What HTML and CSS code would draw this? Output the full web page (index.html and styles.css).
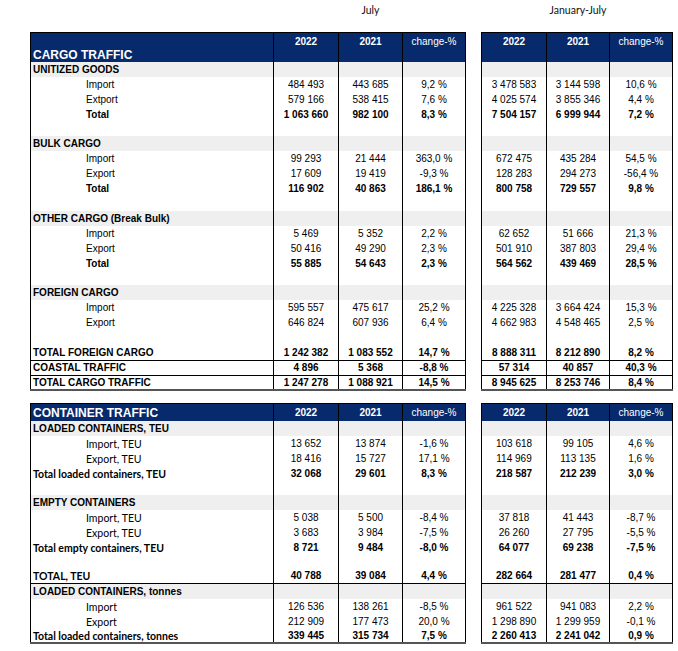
FILE: index.html
```html
<!DOCTYPE html>
<html>
<head>
<meta charset="utf-8">
<link rel="stylesheet" href="styles.css">
</head>
<body>
<div class="page">
<table class="grid">
  <colgroup>
    <col class="w-lbl"><col class="w-a"><col class="w-b"><col class="w-c"><col class="w-gap"><col class="w-a"><col class="w-d"><col class="w-c">
  </colgroup>
  <tr class="cap">
    <td></td><td></td><td class="captxt">July</td><td></td><td></td><td></td><td class="captxt">January-July</td><td></td>
  </tr>
  <tr class="hd">
    <td class="title">CARGO TRAFFIC</td><td class="yr">2022</td><td class="yr">2021</td><td class="chg">change-%</td><td class="gap"></td><td class="yr">2022</td><td class="yr">2021</td><td class="chg">change-%</td>
  </tr>
  <tr class="g"><td class="sec">UNITIZED GOODS</td><td></td><td></td><td></td><td class="gap"></td><td></td><td></td><td></td></tr>
  <tr><td class="ind">Import</td><td>484 493</td><td>443 685</td><td>9,2 %</td><td class="gap"></td><td>3 478 583</td><td>3 144 598</td><td>10,6 %</td></tr>
  <tr><td class="ind">Extport</td><td>579 166</td><td>538 415</td><td>7,6 %</td><td class="gap"></td><td>4 025 574</td><td>3 855 346</td><td>4,4 %</td></tr>
  <tr class="bold"><td class="ind">Total</td><td>1 063 660</td><td>982 100</td><td>8,3 %</td><td class="gap"></td><td>7 504 157</td><td>6 999 944</td><td>7,2 %</td></tr>
  <tr class="blank14"><td></td><td></td><td></td><td></td><td class="gap"></td><td></td><td></td><td></td></tr>
  <tr class="g"><td class="sec">BULK CARGO</td><td></td><td></td><td></td><td class="gap"></td><td></td><td></td><td></td></tr>
  <tr><td class="ind">Import</td><td>99 293</td><td>21 444</td><td>363,0 %</td><td class="gap"></td><td>672 475</td><td>435 284</td><td>54,5 %</td></tr>
  <tr><td class="ind">Export</td><td>17 609</td><td>19 419</td><td>-9,3 %</td><td class="gap"></td><td>128 283</td><td>294 273</td><td>-56,4 %</td></tr>
  <tr class="bold"><td class="ind">Total</td><td>116 902</td><td>40 863</td><td>186,1 %</td><td class="gap"></td><td>800 758</td><td>729 557</td><td>9,8 %</td></tr>
  <tr><td></td><td></td><td></td><td></td><td class="gap"></td><td></td><td></td><td></td></tr>
  <tr class="g"><td class="sec">OTHER CARGO (Break Bulk)</td><td></td><td></td><td></td><td class="gap"></td><td></td><td></td><td></td></tr>
  <tr><td class="ind">Import</td><td>5 469</td><td>5 352</td><td>2,2 %</td><td class="gap"></td><td>62 652</td><td>51 666</td><td>21,3 %</td></tr>
  <tr><td class="ind">Export</td><td>50 416</td><td>49 290</td><td>2,3 %</td><td class="gap"></td><td>501 910</td><td>387 803</td><td>29,4 %</td></tr>
  <tr class="bold"><td class="ind">Total</td><td>55 885</td><td>54 643</td><td>2,3 %</td><td class="gap"></td><td>564 562</td><td>439 469</td><td>28,5 %</td></tr>
  <tr class="blank14"><td></td><td></td><td></td><td></td><td class="gap"></td><td></td><td></td><td></td></tr>
  <tr class="g"><td class="sec">FOREIGN CARGO</td><td></td><td></td><td></td><td class="gap"></td><td></td><td></td><td></td></tr>
  <tr><td class="ind">Import</td><td>595 557</td><td>475 617</td><td>25,2 %</td><td class="gap"></td><td>4 225 328</td><td>3 664 424</td><td>15,3 %</td></tr>
  <tr><td class="ind">Export</td><td>646 824</td><td>607 936</td><td>6,4 %</td><td class="gap"></td><td>4 662 983</td><td>4 548 465</td><td>2,5 %</td></tr>
  <tr><td></td><td></td><td></td><td></td><td class="gap"></td><td></td><td></td><td></td></tr>
  <tr class="bold rule rule15"><td class="sec">TOTAL FOREIGN CARGO</td><td>1 242 382</td><td>1 083 552</td><td>14,7 %</td><td class="gap"></td><td>8 888 311</td><td>8 212 890</td><td>8,2 %</td></tr>
  <tr class="bold rule"><td class="sec">COASTAL TRAFFIC</td><td>4 896</td><td>5 368</td><td>-8,8 %</td><td class="gap"></td><td>57 314</td><td>40 857</td><td>40,3 %</td></tr>
  <tr class="bold last"><td class="sec">TOTAL CARGO TRAFFIC</td><td>1 247 278</td><td>1 088 921</td><td>14,5 %</td><td class="gap"></td><td>8 945 625</td><td>8 253 746</td><td>8,4 %</td></tr>
</table>

<table class="grid second">
  <colgroup>
    <col class="w-lbl"><col class="w-a"><col class="w-b"><col class="w-c"><col class="w-gap"><col class="w-a"><col class="w-d"><col class="w-c">
  </colgroup>
  <tr class="hd2">
    <td class="title">CONTAINER TRAFFIC</td><td class="yr">2022</td><td class="yr">2021</td><td class="chg">change-%</td><td class="gap"></td><td class="yr">2022</td><td class="yr">2021</td><td class="chg">change-%</td>
  </tr>
  <tr class="g"><td class="sec">LOADED CONTAINERS, TEU</td><td></td><td></td><td></td><td class="gap"></td><td></td><td></td><td></td></tr>
  <tr><td class="ind cal">Import, TEU</td><td>13 652</td><td>13 874</td><td>-1,6 %</td><td class="gap"></td><td>103 618</td><td>99 105</td><td>4,6 %</td></tr>
  <tr><td class="ind cal">Export, TEU</td><td>18 416</td><td>15 727</td><td>17,1 %</td><td class="gap"></td><td>114 969</td><td>113 135</td><td>1,6 %</td></tr>
  <tr class="bold"><td class="sec cal">Total loaded containers, TEU</td><td>32 068</td><td>29 601</td><td>8,3 %</td><td class="gap"></td><td>218 587</td><td>212 239</td><td>3,0 %</td></tr>
  <tr class="blank14"><td></td><td></td><td></td><td></td><td class="gap"></td><td></td><td></td><td></td></tr>
  <tr class="g"><td class="sec">EMPTY CONTAINERS</td><td></td><td></td><td></td><td class="gap"></td><td></td><td></td><td></td></tr>
  <tr><td class="ind cal">Import, TEU</td><td>5 038</td><td>5 500</td><td>-8,4 %</td><td class="gap"></td><td>37 818</td><td>41 443</td><td>-8,7 %</td></tr>
  <tr><td class="ind cal">Export, TEU</td><td>3 683</td><td>3 984</td><td>-7,5 %</td><td class="gap"></td><td>26 260</td><td>27 795</td><td>-5,5 %</td></tr>
  <tr class="bold"><td class="sec cal">Total empty containers, TEU</td><td>8 721</td><td>9 484</td><td>-8,0 %</td><td class="gap"></td><td>64 077</td><td>69 238</td><td>-7,5 %</td></tr>
  <tr class="blank14"><td></td><td></td><td></td><td></td><td class="gap"></td><td></td><td></td><td></td></tr>
  <tr class="bold rule"><td class="sec cal">TOTAL, TEU</td><td>40 788</td><td>39 084</td><td>4,4 %</td><td class="gap"></td><td>282 664</td><td>281 477</td><td>0,4 %</td></tr>
  <tr class="g"><td class="sec">LOADED CONTAINERS, tonnes</td><td></td><td></td><td></td><td class="gap"></td><td></td><td></td><td></td></tr>
  <tr><td class="ind cal">Import</td><td>126 536</td><td>138 261</td><td>-8,5 %</td><td class="gap"></td><td>961 522</td><td>941 083</td><td>2,2 %</td></tr>
  <tr><td class="ind cal">Export</td><td>212 909</td><td>177 473</td><td>20,0 %</td><td class="gap"></td><td>1 298 890</td><td>1 299 959</td><td>-0,1 %</td></tr>
  <tr class="bold last"><td class="sec cal">Total loaded containers, tonnes</td><td>339 445</td><td>315 734</td><td>7,5 %</td><td class="gap"></td><td>2 260 413</td><td>2 241 042</td><td>0,9 %</td></tr>
</table>
</div>
</body>
</html>
```

FILE: styles.css
```css
html, body {
  margin: 0;
  padding: 0;
  background: #ffffff;
}

body {
  font-family: "Liberation Sans", Arial, sans-serif;
  font-size: 10px;
  color: #000000;
}

.page {
  padding-left: 30px;
  width: 643px;
}

.grid {
  border-collapse: collapse;
  table-layout: fixed;
  width: 643px;
}

.second {
  margin-top: 12px;
}

.w-lbl { width: 243px; }
.w-a { width: 65px; }
.w-b { width: 64px; }
.w-c { width: 63px; }
.w-d { width: 63px; }
.w-gap { width: 16px; }

.grid td {
  padding: 0;
  height: 15px;
  line-height: 12px;
  text-align: center;
  vertical-align: middle;
  white-space: nowrap;
  border-right: 1px solid #000000;
  overflow: hidden;
}

.grid td:first-child {
  border-left: 1px solid #000000;
  text-align: left;
}

.grid td.gap {
  border-right: none;
  background: #ffffff;
}

.grid td.gap + td {
  border-left: 1px solid #000000;
}

.grid tr.blank14 td {
  height: 14px;
}

.grid tr.cap td {
  border: none;
  height: 32px;
  vertical-align: top;
  padding-top: 4px;
  box-sizing: border-box;
}

.captxt {
  font-family: Lato, "Liberation Sans", sans-serif;
  font-size: 10.5px;
  color: #111111;
}

.grid tr.hd td {
  height: 30px;
  background: #072a6c;
  color: #ffffff;
  vertical-align: top;
  padding-top: 3px;
  border-top: 1px solid #000000;
  box-sizing: border-box;
}

.grid tr.hd2 td {
  height: 17px;
  background: #072a6c;
  color: #ffffff;
  border-top: 1px solid #000000;
}

.grid tr.hd td.gap,
.grid tr.hd2 td.gap {
  background: #ffffff;
  border-top: none;
}

.grid tr.hd td.title {
  vertical-align: bottom;
  padding: 0 0 1px 2px;
}

.title {
  font-size: 12px;
  font-weight: bold;
  line-height: 15px;
  padding-left: 2px;
}

.grid tr.hd2 td.title {
  padding-left: 2px;
}

.yr {
  font-weight: bold;
}

.chg {
  font-weight: normal;
}

.grid tr.g td {
  background: #efefef;
}

.grid tr.g td.gap {
  background: #ffffff;
}

.sec {
  font-weight: bold;
  padding-left: 2px !important;
}

.ind {
  padding-left: 55px !important;
}

.cal {
  font-family: Lato, "Liberation Sans", sans-serif;
  font-size: 10.5px;
}

.grid tr.bold td {
  font-weight: bold;
}

.grid tr.rule td {
  height: 14px;
  border-bottom: 1px solid #000000;
}

.grid tr.rule15 td {
  height: 15px;
}

.grid tr.last td {
  height: 13px;
  border-bottom: 2px solid #555555;
}

.grid tr.rule td.gap,
.grid tr.last td.gap {
  border-bottom: none;
}
```
